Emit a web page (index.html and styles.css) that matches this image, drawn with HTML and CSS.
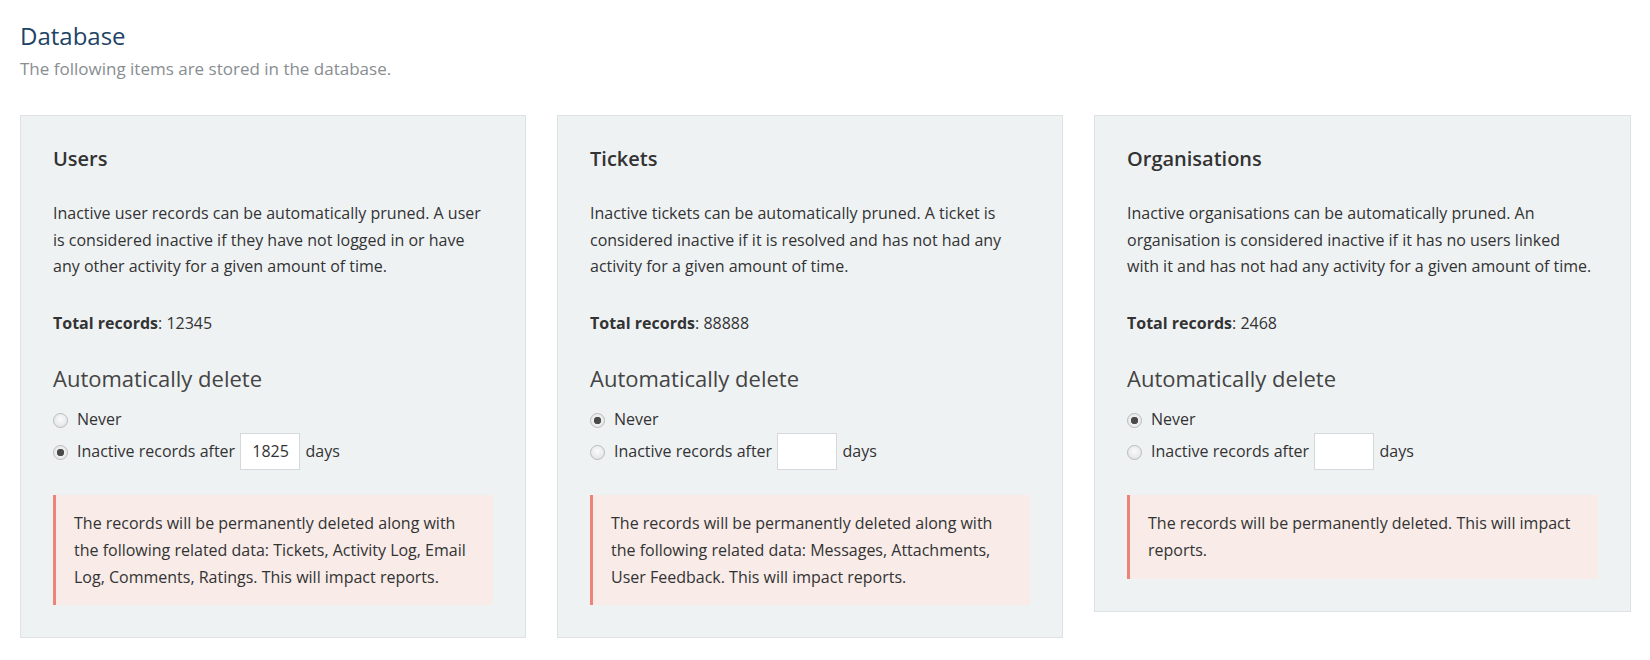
FILE: index.html
```html
<!DOCTYPE html>
<html lang="en">
<head>
<meta charset="utf-8">
<title>Database</title>
<link rel="stylesheet" href="styles.css">
</head>
<body>
<h1 class="page-title">Database</h1>
<p class="page-sub">The following items are stored in the database.</p>

<div class="cards">
  <section class="card">
    <h2 class="card-title">Users</h2>
    <p class="card-text">Inactive user records can be automatically pruned. A user is considered inactive if they have not logged in or have any other activity for a given amount of time.</p>
    <p class="card-total"><strong>Total records</strong>: 12345</p>
    <h3 class="card-sub">Automatically delete</h3>
    <div class="radios">
      <label class="radio-row"><input type="radio" name="users" class="radio">Never</label>
      <label class="radio-row"><input type="radio" name="users" class="radio" checked>Inactive records after <input type="text" class="days" value="1825"> days</label>
    </div>
    <div class="alert">The records will be permanently deleted along with the following related data: Tickets, Activity Log, Email Log, Comments, Ratings. This will impact reports.</div>
  </section>

  <section class="card">
    <h2 class="card-title">Tickets</h2>
    <p class="card-text">Inactive tickets can be automatically pruned. A ticket is considered inactive if it is resolved and has not had any activity for a given amount of time.</p>
    <p class="card-total"><strong>Total records</strong>: 88888</p>
    <h3 class="card-sub">Automatically delete</h3>
    <div class="radios">
      <label class="radio-row"><input type="radio" name="tickets" class="radio" checked>Never</label>
      <label class="radio-row"><input type="radio" name="tickets" class="radio">Inactive records after <input type="text" class="days" value=""> days</label>
    </div>
    <div class="alert">The records will be permanently deleted along with the following related data: Messages, Attachments, User Feedback. This will impact reports.</div>
  </section>

  <section class="card">
    <h2 class="card-title">Organisations</h2>
    <p class="card-text">Inactive organisations can be automatically pruned. An organisation is considered inactive if it has no users linked with&nbsp;it and has not had any activity for a given amount of time.</p>
    <p class="card-total"><strong>Total records</strong>: 2468</p>
    <h3 class="card-sub">Automatically delete</h3>
    <div class="radios">
      <label class="radio-row"><input type="radio" name="orgs" class="radio" checked>Never</label>
      <label class="radio-row"><input type="radio" name="orgs" class="radio">Inactive records after <input type="text" class="days" value=""> days</label>
    </div>
    <div class="alert">The records will be permanently deleted. This will impact reports.</div>
  </section>
</div>
</body>
</html>
```

FILE: styles.css
```css
html, body {
  margin: 0;
  background: #ffffff;
}

body {
  padding: 20px 19px 20px 20px;
  font-family: "Open Sans", "DejaVu Sans", sans-serif;
  color: #333333;
}

.page-title {
  margin: 0;
  font-size: 24px;
  line-height: 32px;
  font-weight: 400;
  color: #1d4466;
}

.page-sub {
  margin: 5px 0 0;
  font-size: 17px;
  line-height: 24px;
  color: #888d91;
}

.cards {
  margin-top: 34px;
  display: grid;
  grid-template-columns: 506px 506px 537px;
  column-gap: 31px;
  align-items: start;
}

.card {
  background: #eff2f3;
  border: 1px solid #dde2e4;
  padding: 31px 32px 32px;
}

.card-title {
  margin: 0 0 29px;
  font-size: 20px;
  line-height: 24px;
  font-weight: 600;
  color: #333333;
}

.card-text {
  margin: 0 0 30px;
  font-size: 16px;
  line-height: 26.7px;
  color: #333333;
}

.card-total {
  margin: 0 0 28px;
  font-size: 16px;
  line-height: 27px;
}

.card-total strong {
  font-weight: 700;
}

.card-sub {
  margin: 0 0 15px;
  font-size: 22px;
  line-height: 26px;
  font-weight: 400;
  color: #444444;
}

.radios {
  margin-bottom: 25px;
}

.radio-row {
  display: block;
  font-size: 16px;
  line-height: 27px;
  color: #333333;
}

.radio {
  -webkit-appearance: none;
  appearance: none;
  display: inline-block;
  width: 15px;
  height: 15px;
  margin: 0 9px 0 0;
  vertical-align: -3px;
  border-radius: 50%;
  border: 1px solid #b9bcbe;
  background: radial-gradient(circle at 50% 40%, #fafafa 0%, #e9eaeb 60%, #d8dadb 100%);
  box-sizing: border-box;
}

.radio:checked {
  background: radial-gradient(circle, #4a4a4a 0, #4a4a4a 3px, #5a5a5a 3.5px, #eeeeee 4px, #e4e5e6 100%);
}

.days {
  box-sizing: border-box;
  width: 60px;
  height: 37px;
  padding: 7px 8px 8px 11px;
  margin: 0 1px;
  border: 1px solid #d6d9db;
  background: #ffffff;
  font-family: "Open Sans", "DejaVu Sans", sans-serif;
  font-size: 16px;
  color: #333333;
  border-radius: 0;
  outline: none;
}

.alert {
  background: #f8ebe8;
  border-left: 3px solid #ec847a;
  padding: 15px 18px 15px 18px;
  font-size: 16px;
  line-height: 26.7px;
  color: #333333;
}
```
